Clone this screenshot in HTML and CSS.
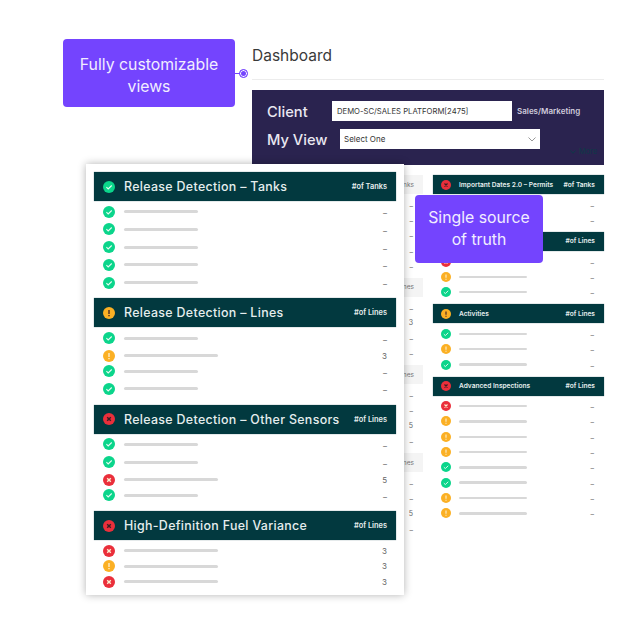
FILE: index.html
```html
<!DOCTYPE html>
<html lang="en">
<head>
  <meta charset="UTF-8">
  <title>Dashboard</title>
  <link rel="stylesheet" href="styles.css">
</head>
<body>

  <svg class="defs" width="0" height="0">
    <symbol id="ok" viewBox="0 0 12 12">
      <circle cx="6" cy="6" r="6" fill="#0bd58b"/>
      <path d="M3.4 6.2 5.2 7.9 8.7 4.5" fill="none" stroke="#e9fbf3" stroke-width="1.1"/>
    </symbol>
    <symbol id="warn" viewBox="0 0 12 12">
      <circle cx="6" cy="6" r="6" fill="#fbb024"/>
      <path d="M6 2.9V7M6 8.1V9.2" fill="none" stroke="currentColor" stroke-width="1.3"/>
    </symbol>
    <symbol id="bad" viewBox="0 0 12 12">
      <circle cx="6" cy="6" r="6" fill="#ea2f3b"/>
      <path d="M4.2 4.2 7.8 7.8M7.8 4.2 4.2 7.8" fill="none" stroke="currentColor" stroke-width="1.4"/>
    </symbol>
  </svg>

  <div class="page">
    <h1 class="title">Dashboard</h1>

    <div class="filters">
      <div class="filter-row">
        <span class="filter-label">Client</span>
        <div class="field field-client">DEMO-SC/SALES PLATFORM[2475]</div>
        <span class="segment">Sales/Marketing</span>
      </div>
      <div class="filter-row filter-row-view">
        <span class="filter-label">My View</span>
        <div class="field field-view">
          Select One
          <svg class="chevron" width="8" height="5" viewBox="0 0 8 5"><path d="M.5.5 4 4 7.5.5" fill="none" stroke="#999"/></svg>
        </div>
      </div>
      <div class="more">
        <svg width="6" height="4" viewBox="0 0 6 4"><path d="M.5.5 3 3.2 5.5.5" fill="none" stroke="#0e3a48"/></svg>
        More
      </div>
    </div>

    <div class="columns">
      <div class="column column-edge">
        <div class="head head-muted"><b>nks</b></div>
        <ul class="list">
          <li><em>–</em></li>
          <li><em>–</em></li>
          <li><em>–</em></li>
          <li><em>–</em></li>
          <li><em>–</em></li>
        </ul>
        <div class="head head-muted"><b>nes</b></div>
        <ul class="list">
          <li><em>–</em></li>
          <li><em class="num">3</em></li>
          <li><em>–</em></li>
          <li><em>–</em></li>
        </ul>
        <div class="head head-muted"><b>nes</b></div>
        <ul class="list">
          <li><em>–</em></li>
          <li><em>–</em></li>
          <li><em class="num">5</em></li>
          <li><em>–</em></li>
        </ul>
        <div class="head head-muted"><b>nes</b></div>
        <ul class="list">
          <li><em>–</em></li>
          <li><em>–</em></li>
          <li><em class="num">5</em></li>
          <li><em>–</em></li>
        </ul>
      </div>

      <div class="column">
        <div class="head">
          <svg class="icon dark"><use href="#bad"/></svg>
          <span>Important Dates 2.0 – Permits</span><b>#of Tanks</b>
        </div>
        <ul class="list">
          <li><svg class="icon"><use href="#ok"/></svg><i></i><em>–</em></li>
          <li><svg class="icon"><use href="#ok"/></svg><i></i><em>–</em></li>
        </ul>
        <div class="head">
          <svg class="icon dark"><use href="#bad"/></svg>
          <b>#of Lines</b>
        </div>
        <ul class="list">
          <li><svg class="icon"><use href="#bad"/></svg><i></i><em>–</em></li>
          <li><svg class="icon"><use href="#warn"/></svg><i></i><em>–</em></li>
          <li><svg class="icon"><use href="#ok"/></svg><i></i><em>–</em></li>
        </ul>
        <div class="head">
          <svg class="icon dark"><use href="#warn"/></svg>
          <span>Activities</span><b>#of Lines</b>
        </div>
        <ul class="list">
          <li><svg class="icon"><use href="#ok"/></svg><i></i><em>–</em></li>
          <li><svg class="icon"><use href="#warn"/></svg><i></i><em>–</em></li>
          <li><svg class="icon"><use href="#ok"/></svg><i></i><em>–</em></li>
        </ul>
        <div class="head">
          <svg class="icon dark"><use href="#bad"/></svg>
          <span>Advanced Inspections</span><b>#of Lines</b>
        </div>
        <ul class="list">
          <li><svg class="icon"><use href="#bad"/></svg><i></i><em>–</em></li>
          <li><svg class="icon"><use href="#warn"/></svg><i></i><em>–</em></li>
          <li><svg class="icon"><use href="#warn"/></svg><i></i><em>–</em></li>
          <li><svg class="icon"><use href="#warn"/></svg><i></i><em>–</em></li>
          <li><svg class="icon"><use href="#ok"/></svg><i></i><em>–</em></li>
          <li><svg class="icon"><use href="#ok"/></svg><i></i><em>–</em></li>
          <li><svg class="icon"><use href="#warn"/></svg><i></i><em>–</em></li>
          <li><svg class="icon"><use href="#warn"/></svg><i></i><em>–</em></li>
        </ul>
      </div>
    </div>
  </div>

  <div class="card">
    <div class="head">
      <svg class="icon"><use href="#ok"/></svg>
      <span>Release Detection – Tanks</span><b>#of Tanks</b>
    </div>
    <ul class="list">
      <li><svg class="icon"><use href="#ok"/></svg><i></i><em>–</em></li>
      <li class="gap"><svg class="icon"><use href="#ok"/></svg><i></i><em>–</em></li>
      <li class="gap"><svg class="icon"><use href="#ok"/></svg><i></i><em>–</em></li>
      <li class="gap"><svg class="icon"><use href="#ok"/></svg><i></i><em>–</em></li>
      <li class="gap"><svg class="icon"><use href="#ok"/></svg><i></i><em>–</em></li>
    </ul>
    <div class="head">
      <svg class="icon dark"><use href="#warn"/></svg>
      <span>Release Detection – Lines</span><b>#of Lines</b>
    </div>
    <ul class="list">
      <li><svg class="icon"><use href="#ok"/></svg><i></i><em>–</em></li>
      <li class="gap"><svg class="icon"><use href="#warn"/></svg><i class="long"></i><em class="num">3</em></li>
      <li><svg class="icon"><use href="#ok"/></svg><i></i><em>–</em></li>
      <li class="gap"><svg class="icon"><use href="#ok"/></svg><i></i><em>–</em></li>
    </ul>
    <div class="head">
      <svg class="icon dark"><use href="#bad"/></svg>
      <span>Release Detection – Other Sensors</span><b>#of Lines</b>
    </div>
    <ul class="list">
      <li><svg class="icon"><use href="#ok"/></svg><i></i><em>–</em></li>
      <li class="gap"><svg class="icon"><use href="#ok"/></svg><i></i><em>–</em></li>
      <li class="gap"><svg class="icon"><use href="#bad"/></svg><i class="long"></i><em class="num">5</em></li>
      <li><svg class="icon"><use href="#ok"/></svg><i></i><em>–</em></li>
    </ul>
    <div class="head">
      <svg class="icon dark"><use href="#bad"/></svg>
      <span>High-Definition Fuel Variance</span><b>#of Lines</b>
    </div>
    <ul class="list">
      <li><svg class="icon"><use href="#bad"/></svg><i class="long"></i><em class="num">3</em></li>
      <li><svg class="icon"><use href="#warn"/></svg><i class="long"></i><em class="num">3</em></li>
      <li><svg class="icon"><use href="#bad"/></svg><i class="long"></i><em class="num">3</em></li>
    </ul>
  </div>

  <div class="callout callout-views">
    Fully customizable views
    <span class="dot"></span>
  </div>
  <div class="callout callout-truth">Single source of truth</div>

</body>
</html>
```

FILE: styles.css
```css
* {
  box-sizing: border-box;
}

html, body {
  margin: 0;
  height: 620px;
  overflow: hidden;
}

body {
  position: relative;
  background: #fff;
  font-family: Inter, "Noto Sans", sans-serif;
}

.defs {
  position: absolute;
}

.page {
  width: 352px;
  margin-left: 252px;
  padding-top: 45px;
}

.title {
  margin: 0;
  height: 34.5px;
  border-bottom: 1px solid #ececec;
  font-size: 15.5px;
  line-height: 21px;
  font-weight: 400;
  color: #3a3a3a;
}

.filters {
  position: relative;
  height: 75px;
  margin-top: 10.5px;
  padding: 11px 15px 0;
  background: #2a234f;
  color: #e9e7f1;
}

.filter-row {
  display: flex;
  align-items: center;
  height: 20px;
}

.filter-row-view {
  margin-top: 8px;
}

.filter-label {
  width: 65px;
  padding-top: 1px;
  font-size: 14.7px;
  font-weight: 500;
  white-space: nowrap;
}

.filter-row-view .filter-label {
  width: 73px;
}

.field {
  height: 20px;
  padding-left: 5px;
  background: #fff;
  color: #333;
  font-size: 8px;
  line-height: 21px;
  white-space: nowrap;
}

.field-client {
  width: 180px;
  font-size: 7.7px;
}

.field-view {
  display: flex;
  align-items: center;
  justify-content: space-between;
  width: 200px;
  padding: 1px 4px 0;
}

.segment {
  margin-left: 5px;
  font-size: 8px;
  font-weight: 600;
  color: #cfcbdc;
}

.more {
  position: absolute;
  right: 7px;
  bottom: 9px;
  display: flex;
  align-items: center;
  gap: 3px;
  font-size: 7.5px;
  color: #0e3a48;
}

.columns {
  display: grid;
  grid-template-columns: 19px 171px;
  gap: 10px;
  margin-top: 10px;
  margin-left: 152px;
}

.head {
  display: flex;
  align-items: center;
  height: 19px;
  padding: 0 9px 0 8px;
  background: #02393f;
  box-shadow: 0 0 1px rgba(2, 57, 63, 0.6);
  color: #e6eeee;
  font-size: 6.6px;
  font-weight: 600;
  white-space: nowrap;
}

.head span {
  margin-left: 8px;
}

.head b {
  margin-left: auto;
  font-weight: 600;
}

.head-muted {
  justify-content: flex-end;
  background: #f4f4f4;
  box-shadow: none;
  color: #777;
}

.head-muted b {
  font-weight: 400;
}

.list {
  margin: 0 0 4.4px;
  padding: 3px 0 0 8px;
  list-style: none;
}

.column-edge .list {
  padding-left: 0;
}

.list li {
  display: flex;
  align-items: center;
  height: 15.3px;
  padding-right: 10px;
}

.list i {
  width: 68px;
  height: 2.5px;
  margin-left: 8px;
  background: #d8d8d8;
  border-radius: 2px;
}

.list em {
  margin-left: auto;
  padding-top: 3px;
  font-size: 7px;
  font-style: normal;
  color: #666;
}

.list em.num {
  padding-top: 0;
}

.icon {
  flex: none;
  width: 10px;
  height: 10px;
  color: #fdf0d2;
}

.icon.dark {
  color: #3a1d22;
}

.card {
  position: absolute;
  left: 86px;
  top: 164px;
  width: 318px;
  height: 431px;
  padding: 8px 8px 0;
  background: #fff;
  box-shadow: 0 0 8px rgba(0, 0, 0, 0.3);
}

.card .head {
  height: 29px;
  padding: 0 9px;
  font-size: 7.4px;
}

.card .head span {
  margin-left: 9px;
  font-size: 12.4px;
  font-weight: 500;
  letter-spacing: 0.33px;
}

.card .icon {
  width: 12px;
  height: 12px;
}

.card .list {
  margin-bottom: 8px;
  padding: 3px 9px 0;
}

.card .list li {
  height: 15.5px;
  padding-right: 0;
}

.card .list li.gap {
  margin-top: 2.2px;
}

.card .list i {
  width: 74px;
  height: 3px;
  margin-left: 9px;
}

.card .list i.long {
  width: 93.5px;
}

.card .list em {
  font-size: 8px;
}

.callout {
  position: absolute;
  width: 172px;
  height: 68px;
  padding: 15px 12px 0;
  background: #7444fe;
  border-radius: 4px;
  color: #f1edff;
  font-size: 15.8px;
  line-height: 22px;
  text-align: center;
}

.callout-views {
  left: 63px;
  top: 39px;
}

.callout-truth {
  left: 415px;
  top: 195px;
  width: 128px;
  padding: 12px 10px 0;
}

.callout-views::after {
  content: "";
  position: absolute;
  left: 172px;
  top: 33.5px;
  width: 5px;
  height: 1px;
  background: #7444fe;
}

.dot {
  position: absolute;
  left: 176px;
  top: 29.5px;
  width: 9px;
  height: 9px;
  background: #7444fe;
  border: 1px solid #7444fe;
  border-radius: 50%;
  box-shadow: inset 0 0 0 1px #fff;
}
```
